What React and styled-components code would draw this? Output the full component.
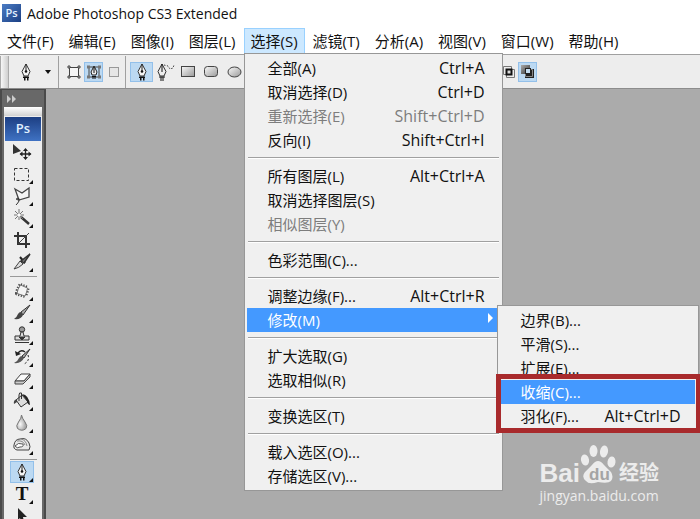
// App.jsx
import React from "react";
import styled, { createGlobalStyle } from "styled-components";

const GlobalStyle = createGlobalStyle`
  *,
  *::before,
  *::after {
    box-sizing: border-box;
  }

  body {
    margin: 0;
    overflow: hidden;
    font-family: "Open Sans", "Noto Sans CJK SC", sans-serif;
    font-size: 15px;
    color: #111;
  }

  button {
    margin: 0;
    padding: 0;
    border: 0;
    background: none;
    font: inherit;
    color: inherit;
  }

  ul {
    margin: 0;
    padding: 0;
    list-style: none;
  }

  svg {
    display: block;
  }
`;

const Window = styled.div`
  position: relative;
  display: flex;
  flex-direction: column;
  height: 100vh;
  overflow: hidden;
  background: #ababab;
`;

const TitleBar = styled.header`
  display: flex;
  align-items: center;
  gap: 6px;
  height: 28px;
  flex-shrink: 0;
  padding-left: 2px;
  background: #fff;
`;

const AppBadge = styled.span`
  width: 19px;
  height: 18px;
  margin-bottom: 2px;
  background: linear-gradient(135deg, #4b7cc4, #1b3f83);
  color: #e4f2ff;
  font-size: 11px;
  font-weight: 600;
  line-height: 17px;
  text-align: center;
`;

const Title = styled.h1`
  margin: 0;
  font-size: 14px;
  font-weight: 400;
  line-height: 28px;
`;

const MenuBar = styled.ul`
  display: flex;
  gap: 1px;
  height: 26px;
  flex-shrink: 0;
  background: #fff;
`;

const MenuBarItem = styled.li`
  position: relative;
`;

const MenuTitle = styled.button`
  height: 26px;
  padding: 0 7px;
  line-height: 26px;
  white-space: nowrap;
  background: ${({ $open }) => ($open ? "#cce8ff" : "transparent")};
  box-shadow: ${({ $open }) => ($open ? "inset 0 0 0 1px #99d1ff" : "none")};
`;

const Menu = styled.ul`
  position: absolute;
  z-index: 2;
  top: 25px;
  left: 0;
  width: 259px;
  padding: 2px;
  background: #f0f0f0;
  border: 1px solid #979797;
`;

const SubMenu = styled(Menu)`
  top: -3px;
  left: 250px;
  width: 202px;
  color: #111;
`;

const MenuRow = styled.li`
  position: relative;
  margin-right: 1px;
  color: ${({ $active, $disabled }) =>
    $active ? "#fff" : $disabled ? "#7d7d7d" : "#111"};
  background: ${({ $active }) => ($active ? "#4499ff" : "transparent")};
`;

const MenuCommand = styled.button`
  display: flex;
  justify-content: space-between;
  align-items: center;
  width: 100%;
  height: 24px;
  padding: 1px 14px 0 21px;
  line-height: 23px;
  white-space: nowrap;
`;

const Shortcut = styled.span`
  font-size: 16px;
`;

const SubArrow = styled.span`
  width: 0;
  margin-right: -8px;
  margin-bottom: 6px;
  border: 5px solid transparent;
  border-left-color: #fff;
  border-right-width: 0;
`;

const MenuLine = styled.li`
  height: 12px;
  padding: 5px 1px;

  &::before {
    content: "";
    display: block;
    height: 2px;
    background: #a0a0a0;
    border-bottom: 1px solid #fff;
  }
`;

const Marker = styled.div`
  position: absolute;
  z-index: 3;
  left: -2px;
  right: -3px;
  bottom: -3px;
  height: 59px;
  border: 5px solid #a82a2c;
  pointer-events: none;
`;

const OptionsBar = styled.div`
  display: flex;
  align-items: center;
  height: 34px;
  flex-shrink: 0;
  background: #ededed;
  border-top: 1px solid #a0a0a0;
`;

const Grip = styled.span`
  width: 9px;
  height: 32px;
  border: 1px solid #aaa;
  border-width: 0 1px;
  background: linear-gradient(90deg, #f6f6f6, #cfcfcf);
`;

const OptionGroup = styled.div`
  display: flex;
  align-items: center;
  height: 32px;
  padding-left: ${({ $inset }) => $inset}px;
  border-right: ${({ $line }) => ($line ? "1px solid #a0a0a0" : "0")};
`;

const OptionButton = styled.button`
  display: grid;
  place-items: center;
  width: ${({ $width }) => $width || 23}px;
  height: 20px;
  background: ${({ $active }) => ($active ? "#bcd9f2" : "transparent")};
  box-shadow: ${({ $active }) => ($active ? "inset 0 0 0 1px #93c0ea" : "none")};
`;

const PathModes = styled(OptionGroup)`
  margin-left: 252px;
`;

const Workspace = styled.main`
  display: flex;
  flex: 1;
  min-height: 0;
  border-top: 1px solid #8d8d8d;
`;

const Dock = styled.aside`
  display: flex;
  flex-direction: column;
  width: 46px;
  padding: 0 2px;
  background: #686868;
  border: 1px solid #4a4a4a;
  border-width: 1px 2px 0 2px;
`;

const DockHeader = styled.button`
  display: flex;
  align-items: center;
  height: 17px;
  padding-left: 2px;
  flex-shrink: 0;
`;

const ToolPanel = styled.div`
  display: flex;
  flex-direction: column;
  flex: 1;
  min-height: 0;
  overflow: hidden;
  background: #eee;
`;

const PanelGrip = styled.div`
  height: 9px;
  flex-shrink: 0;
  background: linear-gradient(#fff, #d2d2d2);
`;

const PanelLogo = styled.div`
  height: 24px;
  margin: 1px 1px 0;
  flex-shrink: 0;
  background: linear-gradient(#1d3f83, #3f72c3);
  color: #e1f0ff;
  font-size: 13px;
  font-weight: 600;
  line-height: 23px;
  text-align: center;
`;

const ToolList = styled.ul`
  display: flex;
  flex-direction: column;
  padding-left: 6px;
`;

const ToolButton = styled.button`
  position: relative;
  display: grid;
  place-items: center;
  width: 24px;
  height: 22px;
  background: ${({ $active }) => ($active ? "#bcd9f2" : "transparent")};
  box-shadow: ${({ $active }) => ($active ? "inset 0 0 0 1px #93c0ea" : "none")};

  &::after {
    content: "";
    position: absolute;
    right: 1px;
    bottom: 1px;
    border: 2px solid #111;
    border-top-color: transparent;
    border-left-color: transparent;
    display: ${({ $single }) => ($single ? "none" : "block")};
  }
`;

const ToolLine = styled.li`
  height: ${({ $short }) => ($short ? 5 : 7)}px;
  width: 27px;
  padding-top: 3px;

  &::before {
    content: "";
    display: block;
    height: 1px;
    background: #999;
  }
`;

const TypeGlyph = styled.span`
  font-family: "Liberation Serif", serif;
  font-size: 19px;
  font-weight: 700;
  line-height: 20px;
`;

const Watermark = styled.div`
  position: absolute;
  right: 41px;
  bottom: 14px;
  color: #ececec;
`;

const WatermarkLogo = styled.div`
  display: flex;
  align-items: flex-end;
  height: 44px;
  font-family: "Liberation Sans", "Noto Sans CJK SC", sans-serif;
  font-size: 26px;
  font-weight: 700;
  line-height: 28px;
`;

const Paw = styled.span`
  padding-bottom: 3px;
`;

const WatermarkName = styled.span`
  margin-left: 2px;
  font-size: 20px;
`;

const WatermarkUrl = styled.div`
  font-size: 14px;
  line-height: 18px;
`;

const PenIcon = () => (
  <svg width="20" height="20" viewBox="0 0 20 20">
    <path d="M10 2 L14 9.5 L12 14 H8 L6 9.5 Z" fill="#f5f5f5" stroke="#333" />
    <path d="M10 2 V9" stroke="#222" />
    <circle cx="10" cy="9.5" r="1.3" fill="#111" />
    <path d="M7 14.5 H13 V16 H7 Z M8 16 H9.5 V18.5 H8 Z M11 16 H12.5 V18.5 H11 Z" fill="#111" />
  </svg>
);

const FreePenIcon = () => (
  <svg width="22" height="20" viewBox="0 0 22 20">
    <path d="M7 2 L11 9.5 L9 14 H5 L3 9.5 Z" fill="#eee" stroke="#333" />
    <path d="M7 2 V10 M4 15 H10 M6 15 V19 M8 15 V19" stroke="#111" fill="none" />
    <path d="M9 3 L13 4 L15 7 L18 6 L19 3" fill="none" stroke="#444" strokeDasharray="1.5 1.5" />
  </svg>
);

const ShapeLayerIcon = () => (
  <svg width="14" height="14" viewBox="0 0 14 14">
    <rect x="2.5" y="2.5" width="9" height="9" fill="#f5f5f5" stroke="#444" />
    <path d="M1 1h2v2h-2z M11 1h2v2h-2z M1 11h2v2h-2z M11 11h2v2h-2z" fill="#ddd" stroke="#444" />
  </svg>
);

const PathsIcon = () => (
  <svg width="16" height="16" viewBox="0 0 16 16">
    <path d="M3 3 H13 V13 H3 Z" fill="none" stroke="#444" />
    <path d="M1 1.5h3v3H1z M12 1.5h3v3h-3z M1 11.5h3v3H1z M12 11.5h3v3h-3z" fill="#777" />
    <path d="M8 2 L11 8 L10 11 H6 L5 8 Z" fill="#eee" stroke="#222" />
    <path d="M8 3 V9 M6 12.5 H10 M7 12 V15 M9 12 V15" stroke="#111" fill="none" />
  </svg>
);

const FillPixelsIcon = () => (
  <svg width="12" height="12" viewBox="0 0 12 12">
    <rect x="1.5" y="1.5" width="9" height="9" fill="#e6e6e6" stroke="#999" />
  </svg>
);

const ShapeIcon = ({ radius = 0, round }) => (
  <svg width="17" height="14" viewBox="0 0 17 14">
    <defs>
      <linearGradient id="shapeFill" x1="0" y1="0" x2="1" y2="1">
        <stop offset="0" stopColor="#fafafa" />
        <stop offset="1" stopColor="#999" />
      </linearGradient>
    </defs>
    {round ? (
      <ellipse cx="7.5" cy="7" rx="6.5" ry="5" fill="url(#shapeFill)" stroke="#444" />
    ) : (
      <rect x="0.5" y="1.5" width="13" height="10" rx={radius} fill="url(#shapeFill)" stroke="#444" />
    )}
  </svg>
);

const IntersectIcon = () => (
  <svg width="14" height="14" viewBox="0 0 14 14">
    <path d="M1.5 1.5h8v8h-8z M4.5 4.5h8v8h-8z" fill="none" stroke="#777" />
    <rect x="4.5" y="4.5" width="5" height="5" fill="#ddd" stroke="#111" strokeWidth="2" />
  </svg>
);

const ExcludeIcon = () => (
  <svg width="15" height="15" viewBox="0 0 15 15">
    <defs>
      <linearGradient id="excludeFill" x1="0" y1="0" x2="1" y2="1">
        <stop offset="0" stopColor="#aaa" />
        <stop offset="1" stopColor="#333" />
      </linearGradient>
    </defs>
    <rect x="1" y="1" width="9" height="9" fill="url(#excludeFill)" />
    <rect x="5" y="5" width="9" height="9" fill="#222" />
    <path d="M10 5.5 H12.5 V12.5 H5.5 V10" fill="none" stroke="#888" />
    <rect x="5.5" y="4.5" width="5" height="5" fill="#c4dcf0" stroke="#222" />
  </svg>
);

const MoveIcon = () => (
  <svg width="22" height="20" viewBox="0 0 22 20">
    <path d="M2 2 L10 9 L2 12 Z" fill="#333" />
    <path d="M14.5 7 V17 M9.5 12 H19.5" stroke="#222" strokeWidth="1.3" />
    <path d="M14.5 6 L17 9 H12 Z M14.5 18 L17 15 H12 Z M8.5 12 L11.5 9.5 V14.5 Z M20.5 12 L17.5 9.5 V14.5 Z" fill="#222" />
  </svg>
);

const MarqueeIcon = () => (
  <svg width="20" height="20" viewBox="0 0 20 20">
    <rect x="2.5" y="4.5" width="14" height="12" fill="none" stroke="#333" strokeDasharray="3 2" />
  </svg>
);

const LassoIcon = () => (
  <svg width="20" height="20" viewBox="0 0 20 20">
    <path d="M3 3 L10 7 L17 2 V11 L7 14 Z" fill="#f5f5f5" stroke="#444" strokeWidth="1.3" />
    <path d="M7 14 Q3 14 5 12 Q8 12 7 15 Q6 17 4 19" fill="none" stroke="#333" />
  </svg>
);

const WandIcon = () => (
  <svg width="20" height="20" viewBox="0 0 20 20">
    <path d="M9 9 L17 16" stroke="#333" strokeWidth="2.5" />
    <path d="M7 1 V12 M2 7 H12 M3 3 L11 11 M11 3 L3 11" stroke="#777" />
    <circle cx="7" cy="7" r="1.6" fill="#fff" />
  </svg>
);

const CropIcon = () => (
  <svg width="20" height="20" viewBox="0 0 20 20">
    <path d="M6 2 V14 H18 M2 6 H14 V18" fill="none" stroke="#333" strokeWidth="2" />
    <path d="M6 14 L17 3" stroke="#444" />
  </svg>
);

const SliceIcon = () => (
  <svg width="20" height="20" viewBox="0 0 20 20">
    <path d="M2 17 L8 9 L11 12 Q7 16 2 17 Z" fill="#ddd" stroke="#444" />
    <path d="M8 5 L13 11" stroke="#222" strokeWidth="2" />
    <path d="M9 9 L18 2 L12 11 Z" fill="#777" stroke="#333" strokeWidth="1.5" />
  </svg>
);

const PatchIcon = () => (
  <svg width="20" height="20" viewBox="0 0 20 20">
    <path
      d="M8.5 4 L15.5 7 Q15 11 13 15 L5 12.5 Q5.5 8 8.5 4 Z"
      fill="none"
      stroke="#444"
      strokeWidth="4"
      strokeDasharray="1.2 1.5"
      strokeLinejoin="round"
    />
    <path d="M8.5 4 L15.5 7 Q15 11 13 15 L5 12.5 Q5.5 8 8.5 4 Z" fill="#f4f4f4" stroke="#777" strokeLinejoin="round" />
  </svg>
);

const BrushIcon = () => (
  <svg width="20" height="20" viewBox="0 0 20 20">
    <path d="M18 2 L9 9 L11 12 Z" fill="#aaa" stroke="#333" />
    <path d="M9 9 L11 12 Q9 17 2 16 Q5 14 6 11 Q7 9 9 9 Z" fill="#444" />
  </svg>
);

const StampIcon = () => (
  <svg width="20" height="20" viewBox="0 0 20 20">
    <circle cx="10" cy="4.5" r="2.7" fill="#999" stroke="#333" />
    <path d="M9 7 H11 L12 11 H17 V15 H3 V11 H8 Z" fill="#ddd" stroke="#333" />
    <path d="M3 17.5 H17 M7 12 H13 L10 15 Z" stroke="#333" fill="#333" />
  </svg>
);

const HistoryIcon = () => (
  <svg width="20" height="20" viewBox="0 0 20 20">
    <path d="M18 2 L10 9 L12 11 Z" fill="#aaa" stroke="#333" />
    <path d="M10 9 L12 11 Q9 17 2 16 Q6 14 7 11 Q8 9 10 9 Z" fill="#555" />
    <path d="M6 6 Q9 2 13 5" fill="none" stroke="#222" strokeWidth="1.5" />
    <path d="M3 4 L4 9 L9 7 Z" fill="#222" />
    <path d="M16 8 Q18 14 12 17" fill="none" stroke="#222" strokeDasharray="2 2" />
  </svg>
);

const EraserIcon = () => (
  <svg width="20" height="20" viewBox="0 0 20 20">
    <path d="M3 12 L9 5 H18 L12 12 Z" fill="#fafafa" stroke="#444" />
    <path d="M3 12 V15 H11 L18 8 V5 L12 12 Z" fill="#ccc" stroke="#444" />
  </svg>
);

const BucketIcon = () => (
  <svg width="20" height="20" viewBox="0 0 20 20">
    <path d="M4 9 L10 4 L16 11 L9 16 Z" fill="#ddd" stroke="#333" />
    <path d="M7 10 V4 Q7 1 9.5 2 V8" fill="none" stroke="#333" />
    <path d="M10 3 Q17 4 18 14 Q15 13 15 10 Z" fill="#222" />
    <path d="M5 8 Q1 9 2 13 L5 11 Z" fill="#444" />
  </svg>
);

const BlurIcon = () => (
  <svg width="20" height="20" viewBox="0 0 20 20">
    <defs>
      <radialGradient id="drop" cx="0.35" cy="0.6">
        <stop offset="0" stopColor="#fafafa" />
        <stop offset="1" stopColor="#aaa" />
      </radialGradient>
    </defs>
    <path d="M9.5 2 Q10 5 13 9 Q16 13 14 15.5 Q10 19 5.5 15.5 Q3.5 13 6.5 9 Q9.5 5 9.5 2 Z" fill="url(#drop)" stroke="#777" />
  </svg>
);

const SpongeIcon = () => (
  <svg width="20" height="20" viewBox="0 0 20 20">
    <path d="M2 10 Q3 4 8 4 Q14 2 17 8 Q19 12 17 15 H5 Q1 14 2 10 Z" fill="#e8e8e8" stroke="#444" />
    <path d="M3 11 Q6 7 11 9 Q12 12 8 12 Q5 14 3 11 Z" fill="#fff" stroke="#555" />
    <path d="M5 6 Q11 5 13 10 M9 4 Q14 5 15 11" fill="none" stroke="#888" />
  </svg>
);

const PathSelectIcon = () => (
  <svg width="20" height="20" viewBox="0 0 20 20">
    <path d="M6 2 L15 11 H11 L12 16 H9 L8 12 L6 14 Z" fill="#222" />
  </svg>
);

const ExpandIcon = () => (
  <svg width="12" height="8" viewBox="0 0 12 8">
    <path d="M1 0 L5 4 L1 8 Z M6 0 L10 4 L6 8 Z" fill="#ccc" />
  </svg>
);

const PawIcon = () => (
  <svg width="37" height="41" viewBox="0 0 37 41" fill="#ececec">
    <ellipse cx="5" cy="17" rx="4" ry="5.5" transform="rotate(-12 5 17)" />
    <ellipse cx="13.5" cy="8" rx="4" ry="6" />
    <ellipse cx="24" cy="8.5" rx="4" ry="6" transform="rotate(10 24 8.5)" />
    <ellipse cx="31.5" cy="19" rx="4" ry="5.5" transform="rotate(8 31.5 19)" />
    <path d="M18 18 Q21 18 24 22 L31 29 Q34 34 31 38 Q28 41 18 39 Q9 42 6 38 Q1 34 5 29 L12 22 Q15 18 18 18 Z" />
    <text x="9" y="37" fill="#a4a4a4" fontSize="17" fontWeight="700">du</text>
  </svg>
);

const menus = [
  "文件(F)", "编辑(E)", "图像(I)", "图层(L)", "选择(S)",
  "滤镜(T)", "分析(A)", "视图(V)", "窗口(W)", "帮助(H)",
];

const modifyItems = [
  { label: "边界(B)..." },
  { label: "平滑(S)..." },
  { label: "扩展(E)..." },
  { label: "收缩(C)...", active: true },
  { label: "羽化(F)...", keys: "Alt+Ctrl+D" },
];

const selectItems = [
  { label: "全部(A)", keys: "Ctrl+A" },
  { label: "取消选择(D)", keys: "Ctrl+D" },
  { label: "重新选择(E)", keys: "Shift+Ctrl+D", disabled: true },
  { label: "反向(I)", keys: "Shift+Ctrl+I" },
  null,
  { label: "所有图层(L)", keys: "Alt+Ctrl+A" },
  { label: "取消选择图层(S)" },
  { label: "相似图层(Y)", disabled: true },
  null,
  { label: "色彩范围(C)..." },
  null,
  { label: "调整边缘(F)...", keys: "Alt+Ctrl+R" },
  { label: "修改(M)", active: true, items: modifyItems },
  null,
  { label: "扩大选取(G)" },
  { label: "选取相似(R)" },
  null,
  { label: "变换选区(T)" },
  null,
  { label: "载入选区(O)..." },
  { label: "存储选区(V)..." },
];

const tools = [
  { name: "Move", icon: <MoveIcon />, single: true },
  { name: "Marquee", icon: <MarqueeIcon /> },
  { name: "Lasso", icon: <LassoIcon /> },
  { name: "Magic wand", icon: <WandIcon /> },
  { name: "Crop", icon: <CropIcon />, single: true },
  { name: "Slice", icon: <SliceIcon /> },
  { line: true },
  { name: "Patch", icon: <PatchIcon /> },
  { name: "Brush", icon: <BrushIcon /> },
  { name: "Clone stamp", icon: <StampIcon /> },
  { name: "History brush", icon: <HistoryIcon /> },
  { name: "Eraser", icon: <EraserIcon /> },
  { name: "Paint bucket", icon: <BucketIcon /> },
  { name: "Blur", icon: <BlurIcon /> },
  { name: "Sponge", icon: <SpongeIcon /> },
  { line: true, short: true },
  { name: "Pen", icon: <PenIcon />, active: true },
  { name: "Type", icon: <TypeGlyph>T</TypeGlyph> },
  { name: "Path selection", icon: <PathSelectIcon /> },
];

const MenuEntry = ({ item }) => (
  <MenuRow $active={item.active} $disabled={item.disabled}>
    <MenuCommand disabled={item.disabled}>
      <span>{item.label}</span>
      {item.keys && <Shortcut>{item.keys}</Shortcut>}
      {item.items && <SubArrow />}
    </MenuCommand>
    {item.items && (
      <SubMenu>
        {item.items.map((sub) => (
          <MenuEntry key={sub.label} item={sub} />
        ))}
        <Marker />
      </SubMenu>
    )}
  </MenuRow>
);

const App = () => {
  return (
    <Window>
      <GlobalStyle />
      <TitleBar>
        <AppBadge>Ps</AppBadge>
        <Title>Adobe Photoshop CS3 Extended</Title>
      </TitleBar>

      <MenuBar>
        {menus.map((name) => {
          const open = name === "选择(S)";
          return (
            <MenuBarItem key={name}>
              <MenuTitle $open={open}>{name}</MenuTitle>
              {open && (
                <Menu>
                  {selectItems.map((item, i) =>
                    item ? <MenuEntry key={item.label} item={item} /> : <MenuLine key={i} />
                  )}
                </Menu>
              )}
            </MenuBarItem>
          );
        })}
      </MenuBar>

      <OptionsBar>
        <Grip />
        <OptionGroup $inset={5} $line>
          <OptionButton aria-label="Tool preset"><PenIcon /></OptionButton>
          <OptionButton aria-label="Preset list" $width={21}>
            <svg width="6" height="4" viewBox="0 0 6 4">
              <path d="M0 0 H6 L3 4 Z" fill="#111" />
            </svg>
          </OptionButton>
        </OptionGroup>
        <OptionGroup $inset={5} $line>
          <OptionButton aria-label="Shape layers" $width={20}><ShapeLayerIcon /></OptionButton>
          <OptionButton aria-label="Paths" $width={19} $active><PathsIcon /></OptionButton>
          <OptionButton aria-label="Fill pixels" $width={22}><FillPixelsIcon /></OptionButton>
        </OptionGroup>
        <OptionGroup $inset={4}>
          <OptionButton aria-label="Pen" $active><PenIcon /></OptionButton>
          <OptionButton aria-label="Freeform pen" $width={25}><FreePenIcon /></OptionButton>
          <OptionButton aria-label="Rectangle"><ShapeIcon /></OptionButton>
          <OptionButton aria-label="Rounded rectangle"><ShapeIcon radius={3} /></OptionButton>
          <OptionButton aria-label="Ellipse"><ShapeIcon round /></OptionButton>
        </OptionGroup>
        <PathModes $inset={0}>
          <OptionButton aria-label="Intersect" $width={19}><IntersectIcon /></OptionButton>
          <OptionButton aria-label="Exclude" $width={19} $active><ExcludeIcon /></OptionButton>
        </PathModes>
      </OptionsBar>

      <Workspace>
        <Dock>
          <DockHeader aria-label="Expand"><ExpandIcon /></DockHeader>
          <ToolPanel>
            <PanelGrip />
            <PanelLogo>Ps</PanelLogo>
            <ToolList>
              {tools.map((tool, i) =>
                tool.line ? (
                  <ToolLine key={i} $short={tool.short} />
                ) : (
                  <li key={tool.name}>
                    <ToolButton aria-label={tool.name} $active={tool.active} $single={tool.single}>
                      {tool.icon}
                    </ToolButton>
                  </li>
                )
              )}
            </ToolList>
          </ToolPanel>
        </Dock>
      </Workspace>

      <Watermark>
        <WatermarkLogo>
          <span>Bai</span>
          <Paw><PawIcon /></Paw>
          <WatermarkName>经验</WatermarkName>
        </WatermarkLogo>
        <WatermarkUrl>jingyan.baidu.com</WatermarkUrl>
      </Watermark>
    </Window>
  );
};

export default App;
